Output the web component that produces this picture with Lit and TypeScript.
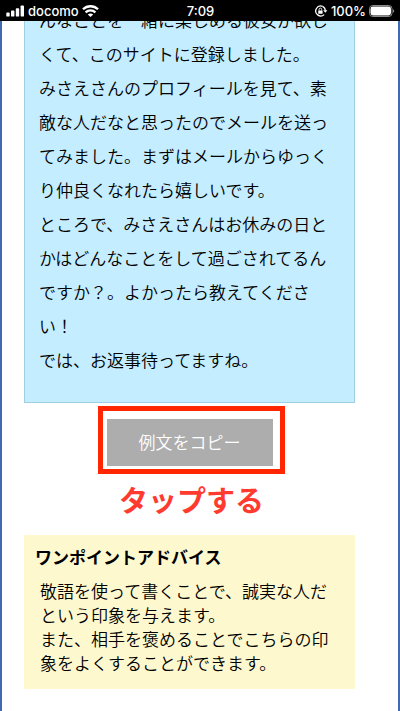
import { LitElement, html, css } from "lit";
import { customElement } from "lit/decorators.js";

@customElement("status-bar")
class StatusBar extends LitElement {
  static styles = css`
    :host {
      display: grid;
      grid-template-columns: 1fr auto 1fr;
      align-items: center;
      height: 21px;
      padding: 0 5px 0 6px;
      background: #000;
      color: #fff;
      font: 500 13px/20px Inter, "Noto Sans CJK JP", sans-serif;
    }
    .group {
      display: flex;
      align-items: center;
      gap: 3px;
    }
    .end {
      justify-content: flex-end;
    }
    svg {
      display: block;
      flex: none;
    }
  `;

  render() {
    return html`
      <div class="group">
        <svg width="19" height="12" viewBox="0 0 19 12" fill="#fff" aria-hidden="true">
          <rect x="0.3" y="7.6" width="3.4" height="4" rx="0.9" />
          <rect x="5" y="5.6" width="3.4" height="6" rx="0.9" />
          <rect x="9.8" y="3.2" width="3.4" height="8.4" rx="0.9" />
          <rect x="14.6" y="0.4" width="3.4" height="11.2" rx="0.9" />
        </svg>
        <span>docomo</span>
        <svg width="17" height="12" viewBox="0 0 17 12" fill="none" stroke="#fff" stroke-width="2.3" aria-hidden="true">
          <path d="M1 4.3C5.2 0.2 11.8 0.2 16 4.3" />
          <path d="M3.6 7.3C6.4 4.6 10.6 4.6 13.4 7.3" />
          <path d="M8.5 12L5.8 9.5C7.4 8.1 9.6 8.1 11.2 9.5Z" fill="#fff" stroke="none" />
        </svg>
      </div>
      <span>7:09</span>
      <div class="group end">
        <svg width="14" height="12" viewBox="0 0 14 12" fill="none" stroke="#fff" stroke-width="1.3" aria-hidden="true">
          <path d="M8.6 1.3A5 5 0 1 0 10.2 9.6" />
          <path d="M8.6 1.3A5 5 0 0 1 11.3 5.6" />
          <path d="M9.2 5.2H13.4L11.3 7.8Z" fill="#fff" stroke="none" />
          <rect x="4.2" y="5.4" width="4.4" height="3.4" rx="0.5" fill="#fff" stroke="none" />
          <path d="M5.1 5.6V4.4A1.3 1.3 0 0 1 7.7 4.4V5.6" stroke-width="0.9" />
        </svg>
        <span>100%</span>
        <svg width="26" height="12" viewBox="0 0 26 12" aria-hidden="true">
          <rect x="0.5" y="0.5" width="22.5" height="11" rx="3.2" fill="none" stroke="#8c8c8c" />
          <rect x="1.5" y="1.5" width="20.5" height="9" rx="2.4" fill="#fff" />
          <path d="M24 4.2C25.6 4.8 25.6 7.2 24 7.8Z" fill="#8c8c8c" />
        </svg>
      </div>
    `;
  }
}

@customElement("app-root")
class AppRoot extends LitElement {
  static styles = css`
    :host {
      display: flex;
      flex-direction: column;
      box-sizing: border-box;
      min-height: 100vh;
      background: #fff;
      color: #000;
      font: 350 17px/24px "Noto Sans CJK JP", sans-serif;
    }
    main {
      flex: 1;
      overflow: hidden;
      padding: 0 43px 20px 22px;
      border: solid #426ab3;
      border-width: 0 2px;
    }
    .message {
      margin: -18px 0 16px;
      padding: 0 14px 25px;
      border: 1px solid #9fcfe3;
      border-top: 0;
      background: #c4edff;
      line-height: 34px;
    }
    p {
      margin: 0;
    }
    .action {
      position: relative;
      width: fit-content;
      margin: 0 auto;
    }
    button {
      display: block;
      padding: 11px 32px 12px;
      border: 0;
      border-radius: 0;
      background: #adadad;
      color: #fff;
      font: inherit;
    }
    .frame {
      position: absolute;
      inset: -13px -12px -8px -9px;
      border: 5px solid #ff2600;
      pointer-events: none;
    }
    .hint {
      margin: 12px 0 15px;
      padding-left: 4px;
      color: #ff3b30;
      font-size: 29px;
      font-weight: 700;
      line-height: 42px;
      text-align: center;
    }
    .advice {
      padding: 10px 11px 14px;
      background: #fef8cf;
    }
    h2 {
      margin: 0 0 10px;
      font-size: 17px;
      font-weight: 700;
      line-height: 24px;
    }
    .body {
      padding: 0 5px;
    }
  `;

  render() {
    return html`
      <status-bar></status-bar>
      <main>
        <section class="message">
          <p>んなことを一緒に楽しめる彼女が欲しくて、このサイトに登録しました。</p>
          <p>みさえさんのプロフィールを見て、素敵な人だなと思ったのでメールを送ってみました。まずはメールからゆっくり仲良くなれたら嬉しいです。</p>
          <p>ところで、みさえさんはお休みの日とかはどんなことをして過ごされてるんですか？。よかったら教えてください！</p>
          <p>では、お返事待ってますね。</p>
        </section>
        <div class="action">
          <button type="button">例文をコピー</button>
          <div class="frame"></div>
        </div>
        <p class="hint">タップする</p>
        <section class="advice">
          <h2>ワンポイントアドバイス</h2>
          <div class="body">
            <p>敬語を使って書くことで、誠実な人だという印象を与えます。</p>
            <p>また、相手を褒めることでこちらの印象をよくすることができます。</p>
          </div>
        </section>
      </main>
    `;
  }
}
